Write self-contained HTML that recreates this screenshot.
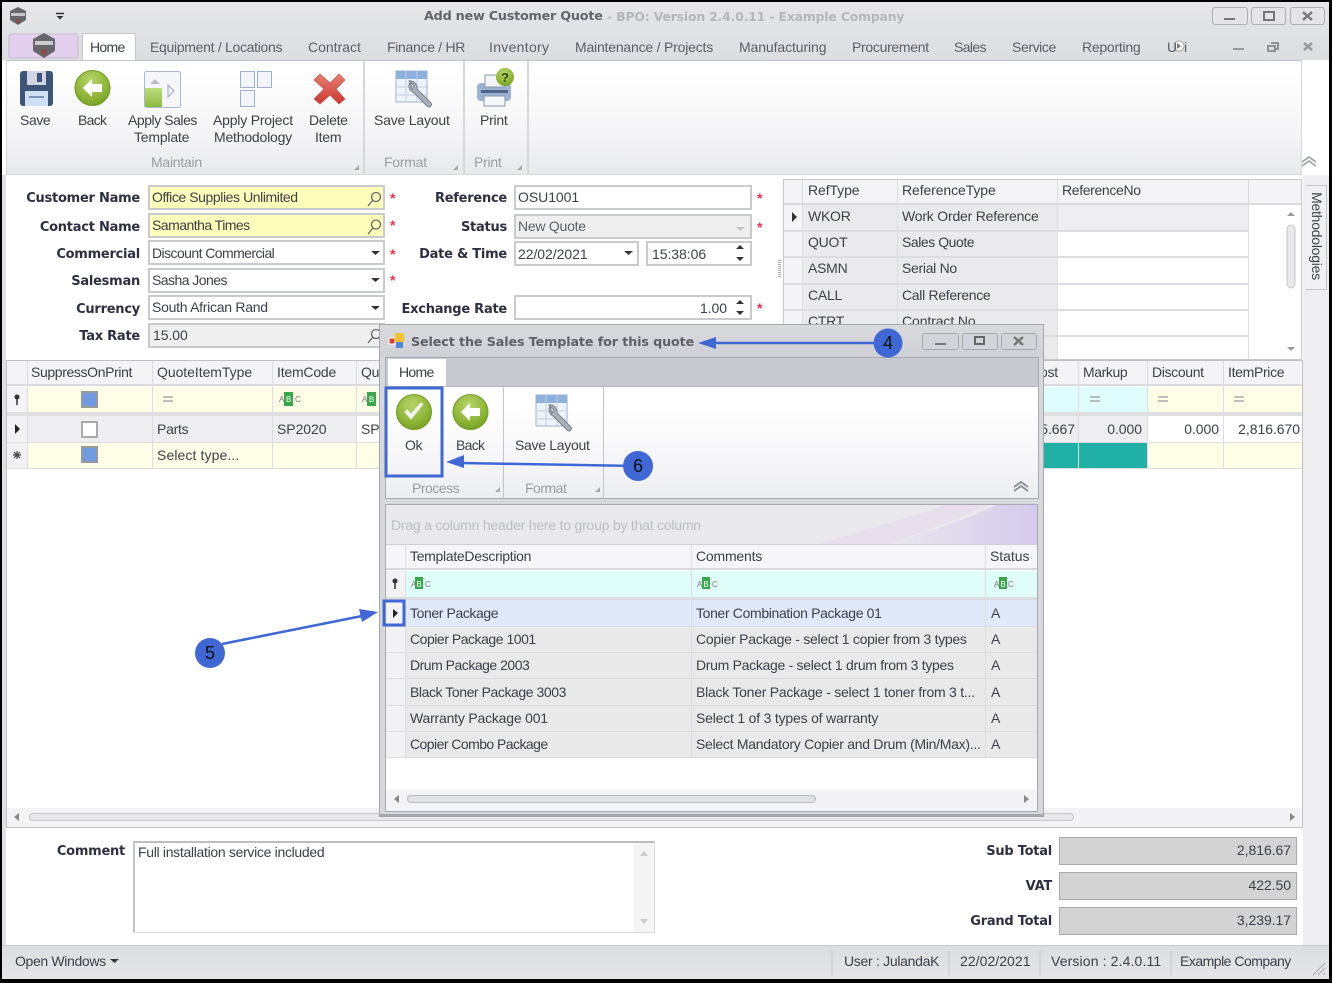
<!DOCTYPE html>
<html><head><meta charset="utf-8"><style>
*{box-sizing:border-box}
html,body{margin:0;padding:0}
body{width:1332px;height:983px;position:relative;overflow:hidden;background:#000;font-family:"Liberation Sans",sans-serif;font-size:14px;color:#3c3f48;filter:blur(.3px)}
div,span.t{position:absolute}
.t{white-space:nowrap;line-height:16px;height:16px;letter-spacing:-.25px;color:#3d4049}
.n{letter-spacing:-.05px}
.b{font-family:"DejaVu Sans",sans-serif;font-weight:bold;font-size:13px;letter-spacing:-.25px;color:#2c3040}
.g{color:#9b9da3}
.m{color:#5c5f68}
.box{border:2px solid #c9cacc;background:#fff}
.ro{background:#efeff0}
.y{background:#fefdb9}
.star{color:#f0304a;font-weight:bold;font-size:14px}
svg{position:absolute;overflow:visible}
.l{background:#dcdde0}
</style></head><body>
<svg width="0" height="0" style="left:0;top:0"><defs>
<radialGradient id="gr" cx=".45" cy=".3" r=".8"><stop offset="0" stop-color="#b7d66a"/><stop offset=".65" stop-color="#8ab232"/><stop offset="1" stop-color="#6f9a22"/></radialGradient>
<linearGradient id="rd" x1="0" x2="0" y1="0" y2="1"><stop offset="0" stop-color="#e87e72"/><stop offset="1" stop-color="#c93a32"/></linearGradient>
<linearGradient id="gn" x1="0" x2="0" y1="0" y2="1"><stop offset="0" stop-color="#bedc7f"/><stop offset="1" stop-color="#8dbb3f"/></linearGradient>
<linearGradient id="p" x1="0" x2="1"><stop offset="0" stop-color="#e9e9ec"/><stop offset="1" stop-color="#cfc3ec"/></linearGradient>
</defs></svg>
<!-- main window -->
<div style="left:2px;top:2px;width:1327px;height:977px;background:#fff;overflow:hidden"></div>
<div style="left:2px;top:2px;width:1327px;height:58px;background:linear-gradient(#e6e6e8,#dcdde0)"></div>
<div style="left:2px;top:175px;width:4px;height:804px;background:#dfe0e3"></div>
<div style="left:1303px;top:175px;width:26px;height:770px;background:#eeeef0"></div>
<!-- app icons -->
<svg style="left:0;top:0" width="90" height="60"><path d="M18 7l8 4v9l-8 5-8-5v-9z" fill="#66676b"/><rect x="11" y="13" width="14" height="3" fill="#c8c8c8"/><circle cx="18" cy="21" r="2" fill="#8c4a4a"/><path d="M56 13.500h8" stroke="#333" stroke-width="1.500"/><path d="M56.500 16h7l-3.500 3.500z" fill="#333"/><rect x="9" y="34" width="69" height="24" fill="#e3d0ee" stroke="#c5bccf" rx="2"/><path d="M44 33l11 6v12l-11 7-11-7v-12z" fill="#66676b"/><rect x="35" y="41" width="18" height="4" fill="#ccc"/><circle cx="44" cy="52" r="3" fill="#8c4a4a"/></svg>
<span class="t b" style="left:424px;top:9px;color:#62656c;font-size:12.800px">Add new Customer Quote</span>
<span class="t b" style="left:607px;top:9px;color:#b4b6ba;font-size:12.300px;letter-spacing:-.1px">- BPO: Version 2.4.0.11 - Example Company</span>
<!-- window buttons -->
<div style="left:1212px;top:7px;width:36px;height:18px;border:1px solid #aeb0b6;border-radius:3px;background:#e5e5e8"></div>
<div style="left:1251px;top:7px;width:35px;height:18px;border:1px solid #aeb0b6;border-radius:3px;background:#e5e5e8"></div>
<div style="left:1290px;top:7px;width:35px;height:18px;border:1px solid #aeb0b6;border-radius:3px;background:#e5e5e8"></div>
<svg style="left:0;top:0" width="1332" height="60"><path d="M1224 19h11" stroke="#777" stroke-width="2"/><rect x="1264" y="12" width="10" height="8" fill="none" stroke="#777" stroke-width="2"/><path d="M1303 12l9 8m0-8l-9 8" stroke="#777" stroke-width="2.500"/><path d="M1233 49h11" stroke="#999" stroke-width="2"/><path d="M1271 43h7v6h-3M1268 46h7v5h-7z" fill="none" stroke="#888" stroke-width="1.800"/><path d="M1304 43l8 7m0-7l-8 7" stroke="#999" stroke-width="2.500"/><circle cx="1179" cy="46" r="5" fill="#fff" stroke="#aaa"/><path d="M1177 43l4 3-4 3z" fill="#777"/></svg>
<!-- tabs -->
<div style="left:82px;top:33px;width:54px;height:28px;background:#fff;border:1px solid #c4c5c9;border-bottom:none;border-radius:2px 2px 0 0"></div>
<span class="t" style="left:90px;top:39px;letter-spacing:-.7px">Home</span>
<span class="t m" style="left:150px;top:39px;letter-spacing:-.3px">Equipment / Locations</span>
<span class="t m" style="left:308px;top:39px;letter-spacing:0">Contract</span>
<span class="t m" style="left:387px;top:39px;letter-spacing:-.3px">Finance / HR</span>
<span class="t m" style="left:489px;top:39px;letter-spacing:.3px">Inventory</span>
<span class="t m" style="left:575px;top:39px;letter-spacing:-.2px">Maintenance / Projects</span>
<span class="t m" style="left:739px;top:39px;letter-spacing:-.1px">Manufacturing</span>
<span class="t m" style="left:852px;top:39px;letter-spacing:-.3px">Procurement</span>
<span class="t m" style="left:954px;top:39px;letter-spacing:-.6px">Sales</span>
<span class="t m" style="left:1012px;top:39px;letter-spacing:-.4px">Service</span>
<span class="t m" style="left:1082px;top:39px;letter-spacing:-.25px">Reporting</span>
<span class="t m" style="left:1167px;top:39px">U</span><span class="t m" style="left:1184px;top:39px">i</span>
<!-- ribbon -->
<div style="left:6px;top:60px;width:1296px;height:115px;background:linear-gradient(#fff 10%,#f3f3f5 70%,#e8e9eb);border:1px solid #d6d7da;border-top:1px solid #c4c5c9"></div>
<div class="l" style="left:363px;top:61px;width:2px;height:113px;background:#d6d7da"></div>
<div class="l" style="left:463px;top:61px;width:2px;height:113px;background:#d6d7da"></div>
<div class="l" style="left:527px;top:61px;width:2px;height:113px;background:#d6d7da"></div>
<svg style="left:0;top:0" width="540" height="175">
<!-- save -->
<rect x="20" y="71" width="33" height="35" rx="3" fill="#3e5479"/><rect x="27" y="71" width="19" height="14" fill="#cfd6e2"/><rect x="37" y="73" width="5" height="9" fill="#3e5479"/><rect x="25" y="91" width="23" height="15" fill="#cfe0f5"/><rect x="29" y="96" width="15" height="2" fill="#7b94b8"/>
<!-- back -->
<circle cx="92.500" cy="88" r="17.500" fill="url(#gr)" stroke="#6f9a22"/><path d="M83 88l9-9v5h10v8H92v5z" fill="#fff"/>
<!-- apply sales -->
<rect x="144.500" y="71.500" width="36" height="36" rx="2" fill="#f4f6fa" stroke="#a9b9d4"/><rect x="145" y="88" width="17" height="19" fill="url(#gn)"/><path d="M150 84l5-5 5 5z" fill="#b9bec6"/><path d="M168 85l6 6-6 6z" fill="none" stroke="#9aa6b8"/>
<!-- project -->
<rect x="240.500" y="71.500" width="14" height="16" fill="#f2f5fb" stroke="#9db1d0"/><rect x="257.500" y="71.500" width="14" height="16" fill="#f2f5fb" stroke="#9db1d0"/><rect x="240.500" y="90.500" width="14" height="16" fill="#f2f5fb" stroke="#9db1d0"/>
<!-- delete -->
<path d="M320 74l10 9 9-9 6 6-9 9 9 10-6 5-9-9-10 9-6-5 10-10-10-9z" fill="url(#rd)" stroke="#b8463f" stroke-width=".6"/>
<!-- layout -->
<rect x="396" y="71" width="31" height="31" fill="#eef3fa" stroke="#9db1cc"/><rect x="396" y="71" width="31" height="8" fill="#8db0dc"/><path d="M396 87h31M396 95h31M406 71v31M417 71v31" stroke="#c3cfdf"/><path d="M410 82a7 7 0 0 0 3 10l14 14a2.500 2.500 0 0 0 4-3l-14-14a7 7 0 0 0-8-8l5 5-2 3z" fill="#a8afb8" stroke="#7b828c"/>
<!-- print -->
<rect x="477" y="83" width="34" height="18" rx="4" fill="#9bb2d2"/><rect x="485" y="75" width="19" height="12" fill="#f2f4f8" stroke="#8b97a8"/><rect x="481" y="90" width="27" height="3" fill="#4f6585"/><rect x="484" y="96" width="21" height="10" fill="#f4f6fa" stroke="#8b97a8"/><circle cx="505" cy="77" r="9" fill="url(#gr)"/><text x="505" y="82" font-size="13" font-weight="bold" text-anchor="middle" fill="#2f4a10" font-family="Liberation Sans">?</text>
<path d="M359 170v-5l-5 5z M458 170v-5l-5 5z M522 170v-5l-5 5z" fill="#aaa"/>
</svg>
<svg style="left:1300px;top:153px" width="18" height="16"><path d="M2 9l7-5 7 5M2 13l7-5 7 5" fill="none" stroke="#a6a9ae" stroke-width="1.800"/></svg>
<span class="t" style="left:20px;top:112px;letter-spacing:-.4px">Save</span>
<span class="t" style="left:78px;top:112px;letter-spacing:-.7px">Back</span>
<span class="t" style="left:128px;top:112px;letter-spacing:-.45px">Apply Sales</span>
<span class="t" style="left:134px;top:129px;letter-spacing:-.2px">Template</span>
<span class="t" style="left:213px;top:112px;letter-spacing:-.2px">Apply Project</span>
<span class="t" style="left:214px;top:129px;letter-spacing:-.2px">Methodology</span>
<span class="t" style="left:309px;top:112px;letter-spacing:-.3px">Delete</span>
<span class="t" style="left:315px;top:129px">Item</span>
<span class="t" style="left:374px;top:112px;letter-spacing:-.2px">Save Layout</span>
<span class="t" style="left:480px;top:112px">Print</span>
<span class="t g" style="left:151px;top:154px">Maintain</span>
<span class="t g" style="left:384px;top:154px">Format</span>
<span class="t g" style="left:474px;top:154px">Print</span>
<!-- form -->
<span class="t b" style="right:1192px;top:191px">Customer Name</span>
<span class="t b" style="right:1192px;top:220px">Contact Name</span>
<span class="t b" style="right:1192px;top:247px">Commercial</span>
<span class="t b" style="right:1192px;top:274px">Salesman</span>
<span class="t b" style="right:1192px;top:302px">Currency</span>
<span class="t b" style="right:1192px;top:329px">Tax Rate</span>
<div class="box y" style="left:148px;top:185px;width:237px;height:25px"></div>
<div class="box y" style="left:148px;top:213px;width:237px;height:25px"></div>
<div class="box" style="left:148px;top:240px;width:237px;height:25px"></div>
<div class="box" style="left:148px;top:268px;width:237px;height:25px"></div>
<div class="box" style="left:148px;top:295px;width:237px;height:25px"></div>
<div class="box ro" style="left:148px;top:323px;width:237px;height:25px"></div>
<span class="t" style="left:152px;top:189px;letter-spacing:-.42px">Office Supplies Unlimited</span>
<span class="t" style="left:152px;top:217px;letter-spacing:-.53px">Samantha Times</span>
<span class="t" style="left:152px;top:245px;letter-spacing:-.57px">Discount Commercial</span>
<span class="t" style="left:152px;top:272px;letter-spacing:-.55px">Sasha Jones</span>
<span class="t" style="left:152px;top:299px;letter-spacing:-.27px">South African Rand</span>
<span class="t n" style="left:153px;top:327px">15.00</span>
<svg style="left:0;top:0" width="400" height="360"><g fill="none" stroke="#666" stroke-width="1.300"><circle cx="376" cy="197" r="4.500"/><path d="M373 200l-5 6"/><circle cx="376" cy="224.500" r="4.500"/><path d="M373 228l-5 6"/><circle cx="376" cy="334" r="4.500"/><path d="M373 337l-5 6"/></g><path d="M371 251h9l-4.500 4zM371 278h9l-4.500 4zM371 306h9l-4.500 4z" fill="#333"/></svg>
<span class="t star" style="left:390px;top:190px">*</span>
<span class="t star" style="left:390px;top:217px">*</span>
<span class="t star" style="left:390px;top:246px">*</span>
<span class="t star" style="left:390px;top:272px">*</span>
<span class="t b" style="right:825px;top:191px">Reference</span>
<span class="t b" style="right:825px;top:220px">Status</span>
<span class="t b" style="right:825px;top:247px">Date &amp; Time</span>
<span class="t b" style="right:825px;top:302px">Exchange Rate</span>
<div class="box" style="left:514px;top:185px;width:238px;height:25px"></div>
<div class="box ro" style="left:514px;top:214px;width:238px;height:25px"></div>
<div class="box" style="left:514px;top:241px;width:125px;height:25px"></div>
<div class="box" style="left:646px;top:241px;width:106px;height:25px"></div>
<div class="box" style="left:514px;top:295px;width:238px;height:25px"></div>
<span class="t n" style="left:518px;top:189px">OSU1001</span>
<span class="t m" style="left:518px;top:218px">New Quote</span>
<span class="t n" style="left:518px;top:246px">22/02/2021</span>
<span class="t n" style="left:652px;top:246px">15:38:06</span>
<span class="t n" style="right:605px;top:300px">1.00</span>
<svg style="left:500px;top:180px" width="300" height="150"><path d="M124 71h9l-4.500 4z" fill="#333"/><path d="M236 69l4-4 4 4zM236 77l4 4 4-4zM236 124l4-4 4 4zM236 131l4 4 4-4z" fill="#333"/><path d="M236 47h9l-4.500 4z" fill="#c4c4c4"/></svg>
<span class="t star" style="left:757px;top:190px">*</span>
<span class="t star" style="left:757px;top:219px">*</span>
<span class="t star" style="left:757px;top:300px">*</span>
<svg style="left:778px;top:260px" width="4" height="18"><path d="M1.500 0v18" stroke="#aaa" stroke-dasharray="1 1" stroke-width="3"/></svg>
<!-- reference grid -->
<div style="left:783px;top:179px;width:519px;height:181px;background:#fff;border:1px solid #c7c8cc"></div>
<div style="left:784px;top:180px;width:517px;height:25px;background:#f4f4f6;border-bottom:2px solid #dadbde"></div>
<div style="left:784px;top:205px;width:19px;height:154px;background:#f4f4f6"></div>
<div style="left:803px;top:205px;width:254px;height:154px;background:#eaeaec"></div>
<div style="left:1057px;top:205px;width:192px;height:26px;background:#eeeef0"></div>
<div class="l" style="left:802px;top:180px;width:1px;height:179px"></div>
<div class="l" style="left:897px;top:180px;width:1px;height:179px"></div>
<div class="l" style="left:1057px;top:180px;width:1px;height:179px"></div>
<div class="l" style="left:1248px;top:180px;width:1px;height:179px"></div>
<div class="l" style="left:784px;top:230px;width:465px;height:2px"></div>
<div class="l" style="left:784px;top:256px;width:465px;height:2px"></div>
<div class="l" style="left:784px;top:283px;width:465px;height:2px"></div>
<div class="l" style="left:784px;top:309px;width:465px;height:2px"></div>
<div class="l" style="left:784px;top:335px;width:465px;height:2px"></div>
<span class="t" style="left:808px;top:182px;letter-spacing:-.1px">RefType</span><span class="t" style="left:902px;top:182px;letter-spacing:-.1px">ReferenceType</span><span class="t" style="left:1062px;top:182px;letter-spacing:-.35px">ReferenceNo</span>
<span class="t" style="left:808px;top:208px">WKOR</span><span class="t" style="left:902px;top:208px;letter-spacing:-.2px">Work Order Reference</span>
<span class="t" style="left:808px;top:234px">QUOT</span><span class="t" style="left:902px;top:234px;letter-spacing:-.45px">Sales Quote</span>
<span class="t" style="left:808px;top:260px">ASMN</span><span class="t" style="left:902px;top:260px;letter-spacing:-.3px">Serial No</span>
<span class="t" style="left:808px;top:287px">CALL</span><span class="t" style="left:902px;top:287px;letter-spacing:-.3px">Call Reference</span>
<span class="t" style="left:808px;top:313px">CTRT</span><span class="t" style="left:902px;top:313px;letter-spacing:-.1px">Contract No</span>
<svg style="left:780px;top:175px" width="530" height="185"><path d="M12 37l5 5-5 5z" fill="#333"/><path d="M507 41l4-4 4 4zM507 172l4 4 4-4z" fill="#999"/><rect x="507" y="50" width="8" height="63" rx="4" fill="#e9e9eb" stroke="#c6c7ca"/></svg>
<div style="left:1306px;top:185px;width:21px;height:105px;background:#f0f0f2;border:1px solid #c6c7cb;border-left:none"></div>
<span class="t" style="left:1269px;top:228px;width:96px;transform:rotate(90deg);font-size:14px;text-align:center">Methodologies</span>
<!-- main grid -->
<div style="left:6px;top:360px;width:1297px;height:468px;background:#fff;border:1px solid #c0c1c5"></div>
<div style="left:7px;top:361px;width:1295px;height:25px;background:#f4f4f6;border-bottom:2px solid #dadbde"></div>
<div style="left:27px;top:387px;width:1275px;height:25px;background:#fefde6"></div>
<div style="left:7px;top:387px;width:20px;height:25px;background:#f4f4f6"></div>
<div style="left:1044px;top:387px;width:103px;height:25px;background:#dffdfd"></div>
<div style="left:7px;top:412px;width:1295px;height:4px;background:#dfe0e2"></div>
<div style="left:7px;top:416px;width:20px;height:52px;background:#f2f2f4"></div>
<div style="left:27px;top:416px;width:329px;height:26px;background:#eeeef0"></div>
<div style="left:1044px;top:416px;width:34px;height:26px;background:#eeeef0"></div>
<div style="left:1078px;top:416px;width:69px;height:26px;background:#eeeef0"></div>
<div style="left:27px;top:443px;width:1275px;height:25px;background:#fefde6"></div>
<div style="left:1044px;top:443px;width:103px;height:25px;background:#20b0a6"></div>
<div class="l" style="left:7px;top:442px;width:1295px;height:1px"></div>
<div class="l" style="left:7px;top:468px;width:1295px;height:1px"></div>
<div class="l" style="left:27px;top:361px;width:1px;height:107px"></div>
<div class="l" style="left:152px;top:361px;width:1px;height:107px"></div>
<div class="l" style="left:272px;top:361px;width:1px;height:107px"></div>
<div class="l" style="left:356px;top:361px;width:1px;height:107px"></div>
<div class="l" style="left:1078px;top:361px;width:1px;height:107px"></div>
<div class="l" style="left:1147px;top:361px;width:1px;height:107px"></div>
<div class="l" style="left:1223px;top:361px;width:1px;height:107px"></div>
<span class="t" style="left:31px;top:364px;letter-spacing:-.37px">SuppressOnPrint</span><span class="t" style="left:157px;top:364px;letter-spacing:-.05px">QuoteItemType</span><span class="t" style="left:277px;top:364px;letter-spacing:-.2px">ItemCode</span><span class="t" style="left:361px;top:364px">Qu</span>
<span class="t" style="left:1083px;top:364px;letter-spacing:-.4px">Markup</span><span class="t" style="left:1152px;top:364px;letter-spacing:-.35px">Discount</span><span class="t" style="left:1228px;top:364px;letter-spacing:-.32px">ItemPrice</span><span class="t" style="left:1040px;top:364px">ost</span>
<span class="t" style="left:157px;top:421px">Parts</span><span class="t n" style="left:277px;top:421px">SP2020</span><span class="t n" style="left:361px;top:421px">SP2</span>
<span class="t" style="left:157px;top:447px;letter-spacing:.1px">Select type...</span>
<span class="t n" style="right:257px;top:421px">5.667</span><span class="t n" style="right:190px;top:421px">0.000</span><span class="t n" style="right:113px;top:421px">0.000</span><span class="t n" style="right:32px;top:421px">2,816.670</span>
<svg style="left:0;top:355px" width="1332" height="120">
<g stroke="#999" stroke-width="2"><rect x="82" y="37" width="15" height="15" fill="#6f9ce0"/><rect x="82" y="67" width="15" height="15" fill="#fff" stroke="#aaa"/><rect x="82" y="92" width="15" height="15" fill="#6f9ce0"/></g>
<path d="M163 42h10M163 46h10M1090 42h10M1090 46h10M1158 42h10M1158 46h10M1234 42h10M1234 46h10" stroke="#aaa" stroke-width="1.500"/>
<g font-family="Liberation Sans" font-size="8" fill="#777"><rect x="284" y="37" width="9" height="14" fill="#38a64a"/><rect x="367" y="37" width="9" height="14" fill="#38a64a"/>
<text x="279" y="47">A</text><text x="288.500" y="47" fill="#fff" text-anchor="middle">B</text><text x="295" y="47">C</text><text x="362" y="47">A</text><text x="371.500" y="47" fill="#fff" text-anchor="middle">B</text></g>
<circle cx="17" cy="42" r="2.500" fill="#333"/><path d="M17 44v6" stroke="#333" stroke-width="1.500"/>
<path d="M15 69l5 5-5 5z" fill="#222"/><path d="M13 100h8M17 96v8M14 97l6 6m0-6l-6 6" stroke="#444" stroke-width="1.200"/>
</svg>
<!-- main h-scroll -->
<div style="left:7px;top:808px;width:1295px;height:19px;background:#f3f3f5"></div>
<div style="left:29px;top:813px;width:1045px;height:8px;background:#e8e8ea;border:1px solid #c5c6c9;border-radius:4px"></div>
<svg style="left:0;top:805px" width="1332" height="20"><path d="M19 8l-5 4 5 4zM1290 8l5 4-5 4z" fill="#888"/></svg>
<!-- footer -->
<span class="t b" style="right:1207px;top:844px">Comment</span>
<div style="left:133px;top:841px;width:522px;height:92px;background:#fff;border:1px solid #d9dadc;border-top:2px solid #bdbec2;border-left:2px solid #c5c6c9"></div>
<div style="left:634px;top:843px;width:20px;height:89px;background:#f5f5f6"></div>
<svg style="left:630px;top:845px" width="30" height="85"><path d="M10 11l4-5 4 5zM10 74l4 5 4-5z" fill="#ccc"/></svg>
<span class="t" style="left:138px;top:844px;letter-spacing:-.31px">Full installation service included</span>
<span class="t b" style="right:280px;top:844px">Sub Total</span>
<span class="t b" style="right:280px;top:879px">VAT</span>
<span class="t b" style="right:280px;top:914px">Grand Total</span>
<div style="left:1059px;top:837px;width:238px;height:28px;background:#d3d3d3;border:1px solid #a9aaad"></div>
<div style="left:1059px;top:872px;width:238px;height:28px;background:#d3d3d3;border:1px solid #a9aaad"></div>
<div style="left:1059px;top:907px;width:238px;height:28px;background:#d3d3d3;border:1px solid #a9aaad"></div>
<span class="t n" style="right:41px;top:842px">2,816.67</span><span class="t n" style="right:41px;top:877px">422.50</span><span class="t n" style="right:41px;top:912px">3,239.17</span>
<!-- status bar -->
<div style="left:2px;top:945px;width:1327px;height:34px;background:linear-gradient(#dcdde0,#e6e6e8);border-top:1px solid #c9cacd"></div>
<span class="t" style="left:15px;top:953px;letter-spacing:-.35px">Open Windows</span>
<svg style="left:0;top:945px" width="1332" height="34"><path d="M110 14h9l-4.500 4z" fill="#333"/><path d="M832 6v25M949 6v25M1040 6v25M1171 6v25" stroke="#c6c7ca"/><path d="M1313 30l12-12M1318 30l7-7M1323 30l2-2" stroke="#aaa"/></svg>
<span class="t" style="left:844px;top:953px;letter-spacing:-.3px">User : JulandaK</span><span class="t n" style="left:960px;top:953px;letter-spacing:.05px">22/02/2021</span><span class="t" style="left:1051px;top:953px;letter-spacing:.13px">Version : 2.4.0.11</span><span class="t" style="left:1180px;top:953px;letter-spacing:-.5px">Example Company</span>
<!-- dialog -->
<div style="left:379px;top:324px;width:665px;height:493px;background:#d7d8dc;border:1px solid #a5a7ad;border-bottom:3px solid #a5a7ad"></div>
<div style="left:380px;top:325px;width:663px;height:32px;background:linear-gradient(#d9dade,#cfd0d5)"></div>
<div style="left:385px;top:357px;width:654px;height:29px;background:#c7c9d1;border:1px solid #a8aab0;border-bottom:none"></div>
<div style="left:388px;top:359px;width:58px;height:28px;background:#fff"></div>
<span class="t" style="left:399px;top:364px;letter-spacing:-.7px">Home</span>
<div style="left:385px;top:386px;width:654px;height:113px;background:linear-gradient(#fff 15%,#f5f5f7 70%,#ecedf0);border:1px solid #a8aab0;border-top:1px solid #b5b6bb"></div>
<div style="left:503px;top:387px;width:1px;height:111px;background:#c4c5c9"></div>
<div style="left:603px;top:387px;width:1px;height:111px;background:#c4c5c9"></div>
<span class="t" style="left:411px;top:334px;font-family:'DejaVu Sans',sans-serif;font-weight:bold;font-size:12.700px;color:#5e6069;letter-spacing:-.1px">Select the Sales Template for this quote</span>
<svg style="left:389px;top:332px" width="18" height="18"><rect x="0" y="6" width="6" height="6" fill="#d8432f" stroke="#fff"/><rect x="6" y="1" width="9" height="9" fill="#f2c230"/><rect x="7" y="10" width="7" height="6" fill="#4f86d6"/></svg>
<div style="left:922px;top:333px;width:37px;height:17px;border:1px solid #a6a8ae;border-radius:3px;background:#d3d4d9"></div>
<div style="left:962px;top:333px;width:36px;height:17px;border:1px solid #a6a8ae;border-radius:3px;background:#d3d4d9"></div>
<div style="left:1001px;top:333px;width:36px;height:17px;border:1px solid #a6a8ae;border-radius:3px;background:#d3d4d9"></div>
<svg style="left:0;top:325px" width="1332" height="180">
<path d="M935 19h11" stroke="#777" stroke-width="2"/><rect x="975" y="12" width="9" height="7" fill="none" stroke="#666" stroke-width="2"/><path d="M1014 12l9 8m0-8l-9 8" stroke="#777" stroke-width="2.500"/>
<circle cx="414" cy="87" r="17.500" fill="url(#gr)" stroke="#6f9a22"/><path d="M405 87l6 7 12-15-2-1-10 11-4-4z" fill="#f2f2ee" stroke="#f2f2ee"/>
<circle cx="470.500" cy="87" r="17.500" fill="url(#gr)" stroke="#6f9a22"/><path d="M461 87l9-9v5h10v8h-10v5z" fill="#fff"/>
<rect x="536" y="70" width="31" height="31" fill="#eef3fa" stroke="#9db1cc"/><rect x="536" y="70" width="31" height="8" fill="#8db0dc"/><path d="M536 86h31M536 94h31M546 70v31M557 70v31" stroke="#c3cfdf"/><path d="M550 81a7 7 0 0 0 3 10l14 14a2.500 2.500 0 0 0 4-3l-14-14a7 7 0 0 0-8-8l5 5-2 3z" fill="#a8afb8" stroke="#7b828c"/>
<path d="M500 167v-5l-5 5zM600 167v-5l-5 5z" fill="#aaa"/>
</svg>
<svg style="left:1012px;top:478px" width="18" height="16"><path d="M2 9l7-5 7 5M2 13l7-5 7 5" fill="none" stroke="#888d96" stroke-width="1.800"/></svg>
<span class="t" style="left:405px;top:437px;letter-spacing:-.4px">Ok</span><span class="t" style="left:456px;top:437px;letter-spacing:-.7px">Back</span><span class="t" style="left:515px;top:437px;letter-spacing:-.3px">Save Layout</span>
<span class="t g" style="left:412px;top:480px;letter-spacing:-.5px">Process</span><span class="t g" style="left:525px;top:480px;letter-spacing:-.5px">Format</span>
<!-- dialog grid -->
<div style="left:385px;top:504px;width:653px;height:308px;background:#fff;border:1px solid #a8aab0"></div>
<div style="left:386px;top:505px;width:651px;height:39px;background:#e9e9ec;overflow:hidden"><svg width="651" height="39" style="left:0;top:0"><path d="M495 39C540 30 590 10 610 0H651V39Z" fill="url(#p)" opacity=".8"/><path d="M430 39C480 25 530 10 560 0H600C570 15 530 30 500 39Z" fill="#e6dcec" opacity=".8"/></svg></div>
<span class="t" style="left:391px;top:517px;color:#bcbec3;letter-spacing:-.22px">Drag a column header here to group by that column</span>
<div style="left:386px;top:544px;width:651px;height:26px;background:#f6f6f8;border-top:1px solid #cfd0d4;border-bottom:2px solid #d8d9dc"></div>
<div style="left:386px;top:571px;width:651px;height:26px;background:#dffdf9"></div>
<div style="left:386px;top:571px;width:20px;height:26px;background:#f2f2f4"></div>
<div style="left:386px;top:597px;width:651px;height:3px;background:#dcdde0"></div>
<div style="left:406px;top:600px;width:631px;height:27px;background:#dfe9f9"></div>
<div style="left:406px;top:627px;width:631px;height:131px;background:#e9e9ea"></div>
<div style="left:386px;top:600px;width:20px;height:158px;background:#f2f2f4"></div>
<div class="l" style="left:386px;top:626px;width:651px;height:1px"></div><div class="l" style="left:386px;top:652px;width:651px;height:1px"></div><div class="l" style="left:386px;top:678px;width:651px;height:1px"></div><div class="l" style="left:386px;top:705px;width:651px;height:1px"></div><div class="l" style="left:386px;top:731px;width:651px;height:1px"></div><div class="l" style="left:386px;top:757px;width:651px;height:1px"></div>
<div class="l" style="left:405px;top:545px;width:1px;height:213px"></div><div class="l" style="left:691px;top:545px;width:1px;height:213px"></div><div class="l" style="left:985px;top:545px;width:1px;height:213px"></div>
<span class="t" style="left:410px;top:548px;letter-spacing:-.3px">TemplateDescription</span><span class="t" style="left:696px;top:548px;letter-spacing:-.2px">Comments</span><span class="t" style="left:990px;top:548px;letter-spacing:-.05px">Status</span>
<span class="t" style="left:410px;top:605px;letter-spacing:-.4px">Toner Package</span><span class="t" style="left:696px;top:605px;letter-spacing:-.35px">Toner Combination Package 01</span><span class="t" style="left:991px;top:605px">A</span>
<span class="t" style="left:410px;top:631px;letter-spacing:-.47px">Copier Package 1001</span><span class="t" style="left:696px;top:631px;letter-spacing:-.28px">Copier Package - select 1 copier from 3 types</span><span class="t" style="left:991px;top:631px">A</span>
<span class="t" style="left:410px;top:657px;letter-spacing:-.49px">Drum Package 2003</span><span class="t" style="left:696px;top:657px;letter-spacing:-.3px">Drum Package - select 1 drum from 3 types</span><span class="t" style="left:991px;top:657px">A</span>
<span class="t" style="left:410px;top:684px;letter-spacing:-.43px">Black Toner Package 3003</span><span class="t" style="left:696px;top:684px;letter-spacing:-.25px">Black Toner Package - select 1 toner from 3 t...</span><span class="t" style="left:991px;top:684px">A</span>
<span class="t" style="left:410px;top:710px;letter-spacing:-.2px">Warranty Package 001</span><span class="t" style="left:696px;top:710px;letter-spacing:-.2px">Select 1 of 3 types of warranty</span><span class="t" style="left:991px;top:710px">A</span>
<span class="t" style="left:410px;top:736px;letter-spacing:-.55px">Copier Combo Package</span><span class="t" style="left:696px;top:736px;letter-spacing:-.28px">Select Mandatory Copier and Drum (Min/Max)...</span><span class="t" style="left:991px;top:736px">A</span>
<div style="left:386px;top:790px;width:651px;height:21px;background:#f3f3f5"></div>
<div style="left:407px;top:795px;width:409px;height:8px;background:#e1e2e5;border:1px solid #b8b9bd;border-radius:4px"></div>
<svg style="left:0;top:540px" width="1332" height="270"><path d="M399 255l-5 4 5 4zM1024 255l5 4-5 4z" fill="#888"/>
<circle cx="395" cy="41" r="2.500" fill="#333"/><path d="M395 43v6" stroke="#333" stroke-width="1.500"/>
<g fill="#777" font-family="Liberation Sans" font-size="8"><rect x="415" y="37" width="8" height="12" fill="#38a64a"/><text x="411" y="47">A</text><text x="419" y="47" fill="#fff" text-anchor="middle">B</text><text x="425" y="47">C</text><rect x="702" y="37" width="8" height="12" fill="#38a64a"/><text x="697" y="47">A</text><text x="706" y="47" fill="#fff" text-anchor="middle">B</text><text x="712" y="47">C</text><rect x="999" y="37" width="8" height="12" fill="#38a64a"/><text x="994" y="47">A</text><text x="1003" y="47" fill="#fff" text-anchor="middle">B</text><text x="1008" y="47">C</text></g>
<path d="M393 69l5 4-5 5z" fill="#222"/></svg>
<!-- annotations -->
<svg style="left:0;top:0" width="1332" height="983">
<g stroke="#3f68d5" fill="none"><rect x="386" y="388" width="56" height="88" stroke-width="3"/><rect x="384" y="601" width="20" height="24" stroke-width="3"/><path d="M712 343H888M462 463l176 3M222 644L362 616" stroke-width="2.500"/></g>
<g fill="#3f68d5"><path d="M698 343l18-6v12z"/><path d="M446 462l18-7v13z"/><path d="M378 612l-19-3 3 13z"/>
<circle cx="888" cy="343" r="14.500"/><circle cx="638" cy="466" r="15"/><circle cx="210" cy="653" r="15"/></g>
<g font-family="Liberation Sans" font-size="18" fill="#111" text-anchor="middle"><text x="888" y="349">4</text><text x="638" y="472">6</text><text x="210" y="659">5</text></g>
</svg>
</body></html>
